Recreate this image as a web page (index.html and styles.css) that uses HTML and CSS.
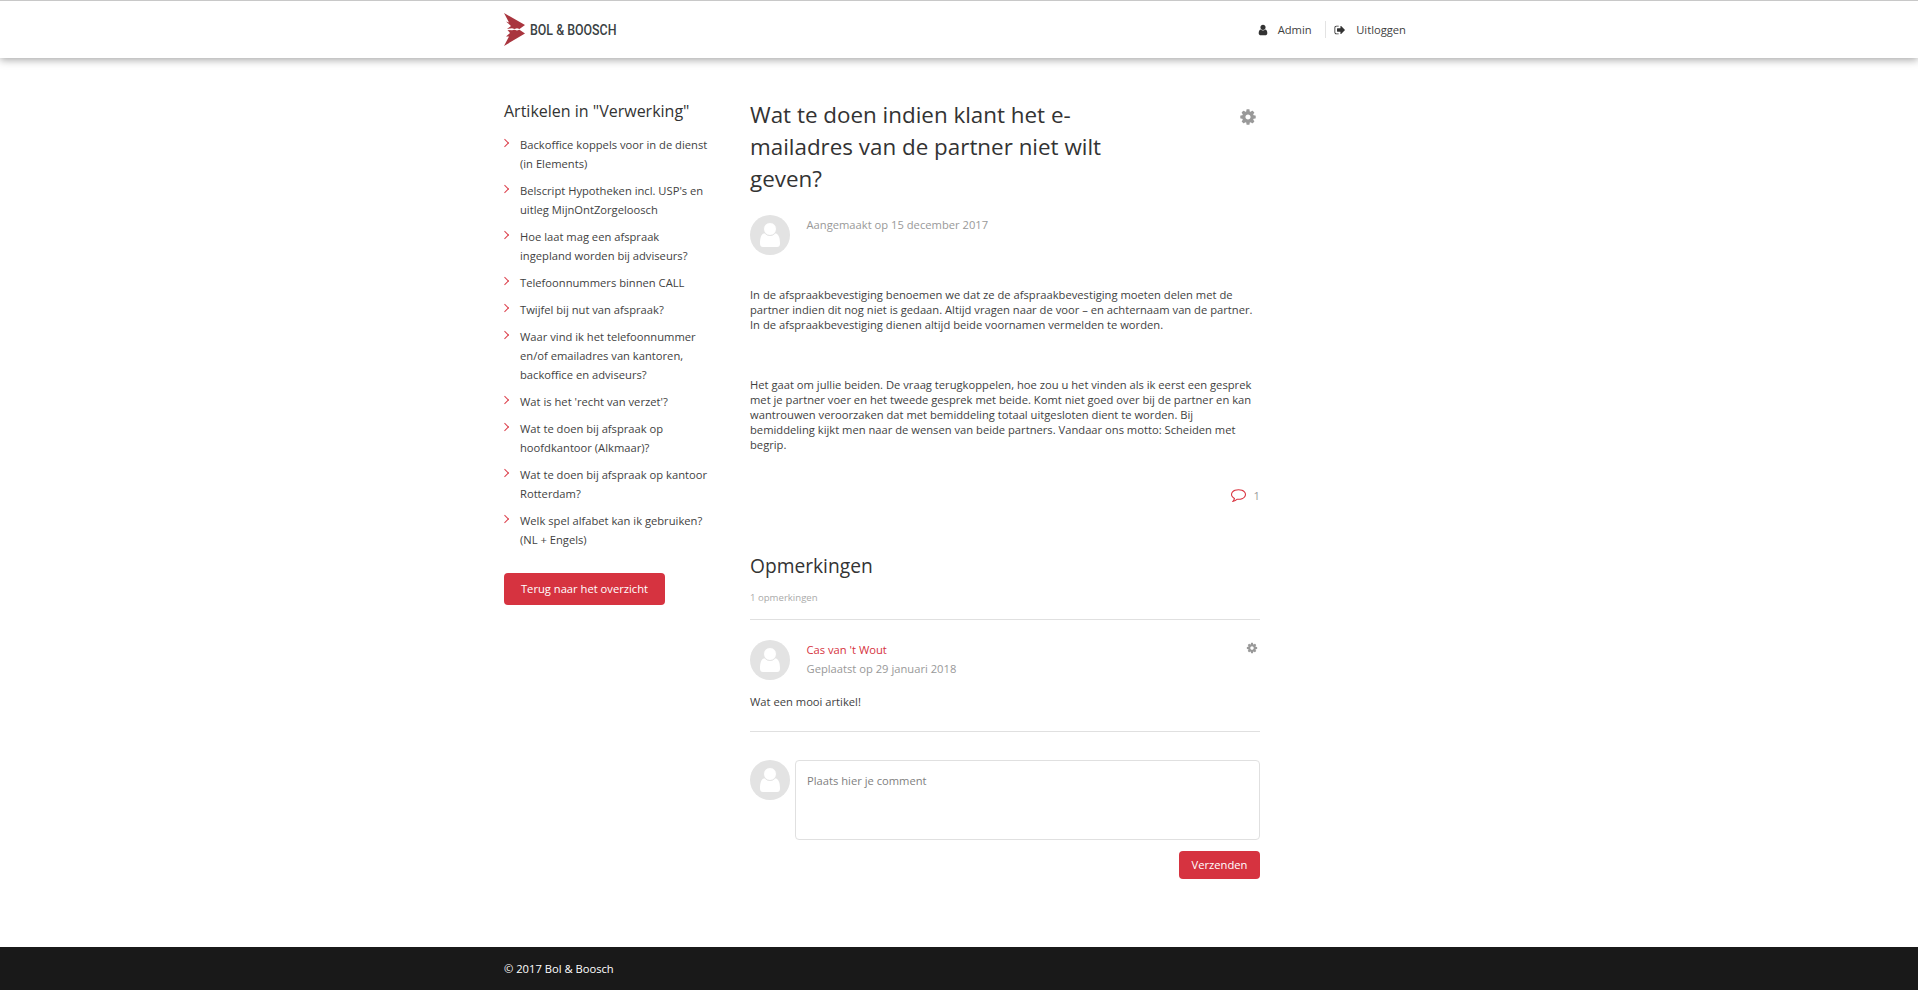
FILE: index.html
```html
<!DOCTYPE html>
<html lang="nl">
<head>
<meta charset="utf-8">
<title>Bol &amp; Boosch</title>
<link rel="stylesheet" href="styles.css">
</head>
<body>
<svg class="defs" width="0" height="0">
  <symbol id="cog" viewBox="0 0 1792 1792"><path d="M1152 896q0-106-75-181t-181-75-181 75-75 181 75 181 181 75 181-75 75-181zm512-109v222q0 12-8 23t-20 13l-185 28q-19 54-39 91 35 50 107 138 10 12 10 25t-9 23q-27 37-99 108t-94 71q-12 0-26-9l-138-108q-44 23-91 38-16 136-29 186-7 28-36 28h-222q-14 0-24.5-8.5t-11.5-21.5l-28-184q-49-16-90-37l-141 107q-10 9-25 9-14 0-25-11-126-114-165-168-7-10-7-23 0-12 8-23 15-21 51-66.5t54-70.5q-27-50-41-99l-183-27q-13-2-21-12.5t-8-23.5v-222q0-12 8-23t19-13l186-28q14-46 39-92-40-57-107-138-10-12-10-24 0-10 9-23 26-36 98.5-107.5t94.5-71.5q13 0 26 10l138 107q44-23 91-38 16-136 29-186 7-28 36-28h222q14 0 24.5 8.5t11.5 21.5l28 184q49 16 90 37l142-107q9-9 24-9 13 0 25 10 129 119 165 170 7 8 7 22 0 12-8 23-15 21-51 66.5t-54 70.5q26 50 41 98l183 28q13 2 21 12.5t8 23.5z"/></symbol>
  <symbol id="avatar" viewBox="0 0 40 40"><circle cx="20" cy="20" r="20" fill="#e3e3e3"/><path d="M14.5 18.2C11.200 19 10 23 10 28.500Q10 32 13 32H27Q30 32 30 28.500C30 23 28.800 19 25.500 18.200Q23 20.900 20 20.900T14.500 18.200Z" fill="#fff"/><circle cx="20" cy="14" r="6.500" fill="#fff" stroke="#e3e3e3" stroke-width="1"/></symbol>
</svg>
<header class="topbar">
  <div class="wrap topbar-inner">
    <svg class="logo" width="114" height="36" viewBox="0 0 114 36">
      <path fill="#a9353e" d="M0 1 21 13 15.500 17 13 16.300 10.500 17 8 16.300 3 17 7 14 2 9.500 5 10.500Z"/>
      <path fill="#a9353e" d="M0 34 21 21.500 15.500 17.800 13 18.600 10.500 17.800 8 18.300 3.500 18 6 21 2 24.500 5 24.500Z"/>
      <text x="26" y="23" textLength="86.500" lengthAdjust="spacingAndGlyphs">BOL &amp; BOOSCH</text>
    </svg>
    <nav class="usernav">
      <a class="user"><svg width="12" height="12" viewBox="0 0 1792 1792"><path d="M1536 1399q0 109-62.500 187t-150.500 78h-854q-88 0-150.500-78t-62.500-187q0-85 8.500-160.500t31.500-152 58.500-131 94-89 134.500-34.500q131 128 313 128t313-128q76 0 134.500 34.500t94 89 58.500 131 31.500 152 8.500 160.500zm-256-887q0 159-112.500 271.500t-271.500 112.500-271.500-112.500-112.500-271.500 112.500-271.500 271.500-112.500 271.500 112.500 112.500 271.500z"/></svg><span>Admin</span></a>
      <a class="logout"><svg width="12" height="12" viewBox="0 0 1792 1792"><path d="M704 1440q0 4 1 20t.5 26.500-3 23.500-10 19.500-20.500 6.500h-320q-119 0-203.500-84.500t-84.500-203.500v-704q0-119 84.500-203.500t203.500-84.500h320q13 0 22.500 9.500t9.500 22.500q0 4 1 20t.5 26.500-3 23.500-10 19.500-20.500 6.500h-320q-66 0-113 47t-47 113v704q0 66 47 113t113 47h312l11.500 1 11.500 3 8 5.500 7 9 2 13.500zm928-544q0 26-19 45l-544 544q-19 19-45 19t-45-19-19-45v-288h-448q-26 0-45-19t-19-45v-384q0-26 19-45t45-19h448v-288q0-26 19-45t45-19 45 19l544 544q19 19 19 45z"/></svg><span>Uitloggen</span></a>
    </nav>
  </div>
</header>
<main class="wrap content">
  <aside class="sidebar">
    <h3>Artikelen in "Verwerking"</h3>
    <ul>
      <li>Backoffice koppels voor in de dienst<br>(in Elements)</li>
      <li>Belscript Hypotheken incl. USP's en<br>uitleg MijnOntZorgeloosch</li>
      <li>Hoe laat mag een afspraak<br>ingepland worden bij adviseurs?</li>
      <li>Telefoonnummers binnen CALL</li>
      <li>Twijfel bij nut van afspraak?</li>
      <li>Waar vind ik het telefoonnummer<br>en/of emailadres van kantoren,<br>backoffice en adviseurs?</li>
      <li>Wat is het 'recht van verzet'?</li>
      <li>Wat te doen bij afspraak op<br>hoofdkantoor (Alkmaar)?</li>
      <li>Wat te doen bij afspraak op kantoor<br>Rotterdam?</li>
      <li>Welk spel alfabet kan ik gebruiken?<br>(NL + Engels)</li>
    </ul>
    <a class="btn btn-back">Terug naar het overzicht</a>
  </aside>
  <article class="article">
    <div class="title-row">
      <h1>Wat te doen indien klant het e-<br>mailadres van de partner niet wilt<br>geven?</h1>
      <svg class="cog" width="18" height="18"><use href="#cog"/></svg>
    </div>
    <div class="byline">
      <svg width="40" height="40"><use href="#avatar"/></svg>
      <p>Aangemaakt op 15 december 2017</p>
    </div>
    <div class="body">
      <p>In de afspraakbevestiging benoemen we dat ze de afspraakbevestiging moeten delen met de<br>partner indien dit nog niet is gedaan. Altijd vragen naar de voor – en achternaam van de partner.<br>In de afspraakbevestiging dienen altijd beide voornamen vermelden te worden.</p>
      <p>Het gaat om jullie beiden. De vraag terugkoppelen, hoe zou u het vinden als ik eerst een gesprek<br>met je partner voer en het tweede gesprek met beide. Komt niet goed over bij de partner en kan<br>wantrouwen veroorzaken dat met bemiddeling totaal uitgesloten dient te worden. Bij<br>bemiddeling kijkt men naar de wensen van beide partners. Vandaar ons motto: Scheiden met<br>begrip.</p>
    </div>
    <div class="count">
      <svg width="15" height="15" viewBox="0 0 1792 1792"><path d="M896 384q-204 0-381.500 69.500t-282 187.500-104.500 255q0 112 71.500 213.500t201.500 175.500l87 50-27 96q-24 91-70 172 152-63 275-171l43-38 57 6q69 8 130 8 204 0 381.500-69.500t282-187.500 104.500-255-104.500-255-282-187.500-381.500-69.500zm896 512q0 174-120 321.500t-326 233-450 85.500q-70 0-145-8-198 175-460 242-49 14-114 22h-5q-15 0-27-10.500t-16-27.500v-1q-3-4-.5-12t2-10 4.500-9.500l6-9 7-8.500 8-9q7-8 31-34.500t34.500-38 31-39.500 32.500-51 27-59 26-76q-157-89-247.500-220t-90.500-281q0-174 120-321.500t326-233 450-85.500 450 85.500 326 233 120 321.500z"/></svg>
      <span>1</span>
    </div>
    <section class="comments">
      <h2>Opmerkingen</h2>
      <p class="total">1 opmerkingen</p>
      <div class="comment">
        <div class="comment-head">
          <svg width="40" height="40"><use href="#avatar"/></svg>
          <div class="meta"><a>Cas van 't Wout</a><p>Geplaatst op 29 januari 2018</p></div>
          <svg class="cog" width="12" height="12"><use href="#cog"/></svg>
        </div>
        <p class="comment-text">Wat een mooi artikel!</p>
      </div>
      <form class="reply">
        <svg width="40" height="40"><use href="#avatar"/></svg>
        <textarea placeholder="Plaats hier je comment"></textarea>
      </form>
      <div class="send-row"><a class="btn btn-send">Verzenden</a></div>
    </section>
  </article>
</main>
<footer class="footer"><div class="wrap">© 2017 Bol &amp; Boosch</div></footer>
</body>
</html>
```
FILE: styles.css
```css
* { box-sizing: border-box; }
body { margin: 0; min-height: 990px; display: flex; flex-direction: column; background: #fff; color: #3f3f3f; font: 11.2px/19px "Open Sans", sans-serif; }
h1, h2, h3, p, ul { margin: 0; padding: 0; font-weight: 400; }
svg { display: block; flex: none; }
.defs { position: absolute; }
.wrap { width: 910px; margin: 0 auto; }

.topbar { height: 58px; border-top: 1px solid #c8c8c8; background: #fff; box-shadow: 0 2px 8px rgba(0, 0, 0, .35); }
.topbar-inner { display: flex; justify-content: space-between; padding-top: 11px; }
.logo { overflow: visible; }
.logo text { font: 500 15.5px Roboto, sans-serif; fill: #3a4143; }
.usernav { display: flex; padding: 9px 8px 0 0; height: 26px; }
.usernav a { display: flex; align-items: center; height: 17px; }
.usernav svg { fill: #333; }
.user { gap: 8.5px; padding-right: 13.5px; border-right: 1px solid #e3e3e3; }
.logout { gap: 10px; padding-left: 8px; }

.content { flex: 1; display: flex; gap: 42px; }
.sidebar { width: 204px; padding-top: 43px; }
.sidebar h3 { font-size: 16px; line-height: 20px; color: #333; white-space: nowrap; }
.sidebar ul { list-style: none; margin-top: 14px; display: flex; flex-direction: column; gap: 8px; }
.sidebar li { position: relative; padding-left: 16px; white-space: nowrap; }
.sidebar li::before { content: ""; position: absolute; left: -1.6px; top: 5.2px; width: 4.7px; height: 4.7px; border: solid #dc3f4b; border-width: 1px 1px 0 0; transform: rotate(45deg); }
.btn { display: inline-flex; align-items: center; justify-content: center; padding-bottom: 1px; border-radius: 4px; background: #d63340; color: #fff; }
.btn-back { width: 161px; height: 32px; margin-top: 24px; }

.article { width: 510px; padding-top: 41px; }
.title-row { display: flex; justify-content: space-between; }
.title-row h1 { font-size: 22.4px; line-height: 32px; color: #333; white-space: nowrap; }
.cog { fill: #999; }
.title-row .cog { margin: 8.5px 3px 0 0; }
.byline { display: flex; gap: 16.5px; margin-top: 20px; color: #999; }
.body { margin-top: 32px; line-height: 15px; display: flex; flex-direction: column; gap: 45px; white-space: nowrap; }
.count { display: flex; justify-content: flex-end; align-items: center; gap: 8px; height: 19px; margin-top: 34px; color: #999; }
.count svg { fill: #d9333f; margin-top: -2px; }
.comments h2 { margin-top: 48px; font-size: 19.2px; line-height: 26px; color: #333; }
.total { font-size: 9.6px; line-height: 16px; margin-top: 11px; color: #aaa; height: 29px; }
.comment { border: solid #e0e0e0; border-width: 1px 0; padding-top: 20px; height: 113px; }
.comment-head { display: flex; }
.meta { flex: 1; padding-left: 16.5px; }
.meta a { color: #d63340; display: block; }
.meta p { color: #999; }
.comment-head .cog { margin: 2px 2px 0 0; }
.comment-text { margin-top: 12px; }
.reply { display: flex; gap: 5px; margin-top: 28px; }
.reply textarea { flex: 1; height: 80px; padding: 10px 11px; border: 1px solid #e0e0e0; border-radius: 4px; font: 11.2px/19px "Open Sans", sans-serif; resize: none; }
.reply textarea::placeholder { color: #7f7f7f; }
.send-row { display: flex; justify-content: flex-end; margin-top: 11px; }
.btn-send { width: 81px; height: 28px; }

.footer { height: 43px; background: #191919; color: #fff; padding-top: 12px; }
```
